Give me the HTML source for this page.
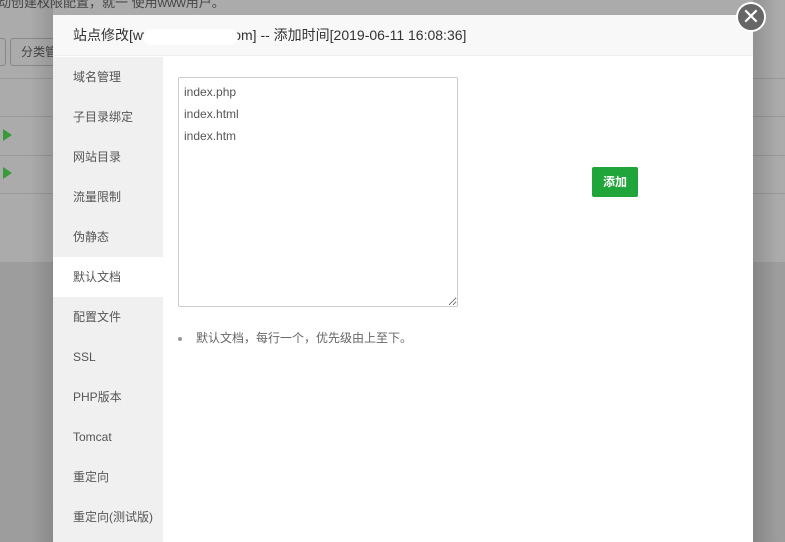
<!DOCTYPE html>
<html><head><meta charset="utf-8"><style>
*{margin:0;padding:0;box-sizing:border-box}
html,body{width:785px;height:542px;overflow:hidden}
body{position:relative;background:#a9a9a9;font-family:"Liberation Sans","Noto Sans CJK SC",sans-serif;color:#555}
.bgtop{position:absolute;left:0;top:0;width:785px;height:262px;background:#ababab}
.bgbot{position:absolute;left:0;top:262px;width:785px;height:280px;background:#9d9d9d}
.line{position:absolute;left:0;width:785px;height:1px;background:#999}
.shl{position:absolute;left:30px;top:0;width:23px;height:542px;background:linear-gradient(to right,rgba(0,0,0,0),rgba(0,0,0,.12))}
.shr{position:absolute;left:753px;top:0;width:25px;height:542px;background:linear-gradient(to left,rgba(0,0,0,0),rgba(0,0,0,.15))}
.modal{position:absolute;left:53px;top:15px;width:700px;height:527px;background:#fff;overflow:hidden}
.hd{height:41px;background:#f8f8f8;border-bottom:1px solid #eee;font-size:14px;color:#333;line-height:41px;padding-left:20px;position:relative}
.blob{position:absolute;left:90px;top:14px;width:95px;height:16px;background:#fff;border-radius:8px}
.side{position:absolute;left:0;top:42px;width:110px;height:500px;background:#f0f0f0}
.side div{height:40px;line-height:40px;padding-left:20px;font-size:12px;color:#555}
.side .on{background:#fff}
textarea{position:absolute;left:125px;top:62px;width:280px;height:230px;border:1px solid #ccc;border-radius:2px;font-family:inherit;font-size:12px;line-height:22px;padding:3px 5px;color:#555;resize:both}
.btn{position:absolute;left:539px;top:152px;width:46px;height:30px;background:#20a53a;border-radius:2px;color:#fff;font-size:12px;font-weight:bold;text-align:center;line-height:30px}
.tip{position:absolute;left:125px;top:314px;font-size:12px;color:#666}
.tip span{display:inline-block;width:4px;height:4px;border-radius:50%;background:#999;margin-right:14px;vertical-align:middle}
.close{position:absolute;left:736px;top:2px;width:30px;height:30px;border-radius:50%;background:#666;border:2px solid #fff;color:#fff;text-align:center;line-height:25px;font-size:22px}
.tri{position:absolute;left:3px;width:0;height:0;border-left:9px solid #3a9a3a;border-top:6px solid transparent;border-bottom:6px solid transparent}
</style></head><body>
<div class="bgtop"></div><div class="bgbot"></div>
<div style="position:absolute;left:-2px;top:-8px;font-size:13px;color:#444">动创建权限配置，就一 使用www用户。</div>
<div style="position:absolute;left:-4px;top:38px;width:10px;height:28px;border:1px solid #888;border-radius:3px"></div>
<div style="position:absolute;left:10px;top:38px;width:60px;height:28px;border:1px solid #888;border-radius:3px;font-size:12px;line-height:26px;padding-left:10px;color:#444">分类管</div>
<div class="line" style="top:78px"></div><div class="line" style="top:116px"></div><div class="line" style="top:155px"></div><div class="line" style="top:193px"></div>
<div class="tri" style="top:129px"></div><div class="tri" style="top:167px"></div>
<div class="shl"></div><div class="shr"></div>
<div class="modal">
<div class="hd">站点修改[www.xxxxxxxxx.om] -- 添加时间[2019-06-11 16:08:36]<div class="blob"></div></div>
<div class="side"><div>域名管理</div><div>子目录绑定</div><div>网站目录</div><div>流量限制</div><div>伪静态</div><div class="on">默认文档</div><div>配置文件</div><div>SSL</div><div>PHP版本</div><div>Tomcat</div><div>重定向</div><div>重定向(测试版)</div></div>
<textarea>index.php
index.html
index.htm</textarea>
<div class="btn">添加</div>
<div class="tip"><span></span>默认文档，每行一个，优先级由上至下。</div>
</div>
<div class="close">✕</div>
</body></html>
